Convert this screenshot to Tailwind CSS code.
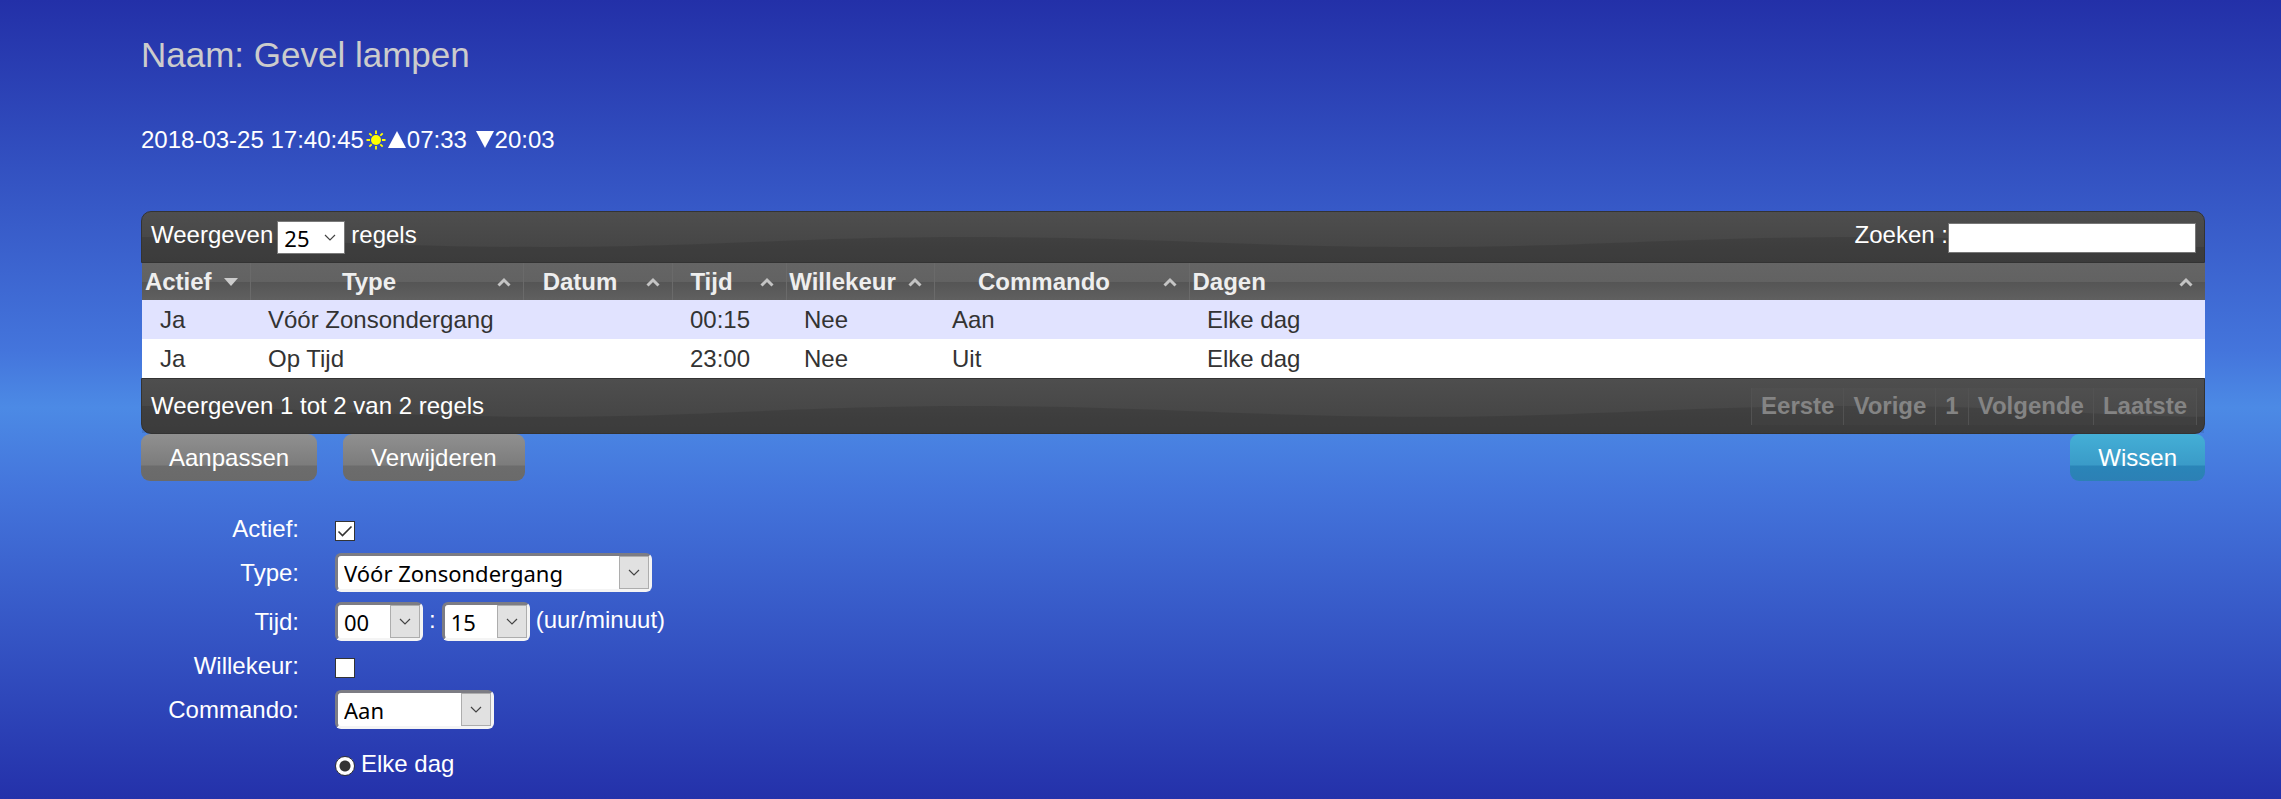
<!DOCTYPE html>
<html lang="nl">
<head>
    <meta charset="UTF-8">
    <meta name="viewport" content="width=device-width, initial-scale=1.0">
    <title>Timers - Gevel lampen</title>
    <script src="https://cdn.jsdelivr.net/npm/@tailwindcss/browser@4"></script>
</head>
<body class="min-h-screen bg-[linear-gradient(#2330a8,#4475dc_44%,#4c8ae5_51%,#4475dc_61%,#2431aa)] font-['Liberation_Sans',Arial,sans-serif] text-[24px] leading-[28px] text-white">
    <svg class="hidden">
        <symbol id="chevron" viewBox="0 0 12 8"><path d="M1 1l5 5 5-5" fill="none" stroke="#444" stroke-width="1.2"/></symbol>
        <symbol id="sort" viewBox="0 0 14 10"><path d="M1.500 8.500L7 3l5.500 5.500" fill="none" stroke="#c4c4c4" stroke-width="3"/></symbol>
        <symbol id="wave" viewBox="0 0 2064 50" preserveAspectRatio="none"><path d="M0 25C130 25 230 35 400 35S650 25 830 25S1110 35 1280 35S1540 25 1720 25S1950 35 2064 35V50H0Z" fill="#000" fill-opacity=".1"/></symbol>
    </svg>

    <main class="pt-[35px] pr-[76px] pl-[141px]">
        <h2 class="text-[35px] leading-[40px] text-[#ccc]">Naam: Gevel lampen</h2>

        <!-- tijd en zonstand -->
        <div class="mt-[51px] flex items-center whitespace-pre">
            <span>2018-03-25 17:40:45</span>
            <svg class="ml-[2px] h-5 w-5" viewBox="0 0 20 20" stroke="#ff0" stroke-width="1.800"><circle cx="10" cy="10" r="5" fill="#ff0" stroke="none"/><path d="M10 .5v3.500M10 16v3.500M.5 10H4M16 10h3.500M3.300 3.300l2.400 2.400M14.300 14.300l2.400 2.400M3.300 16.700l2.400-2.400M14.300 5.700l2.400-2.400"/></svg>
            <svg class="ml-[2px] h-5 w-[18px]" viewBox="0 0 18 20"><path d="M9 1l9 17H0z" fill="#fff"/></svg>
            <span class="ml-px">07:33 </span>
            <svg class="ml-[2px] h-5 w-[18px]" viewBox="0 0 18 20"><path d="M9 18L0 1h18z" fill="#fff"/></svg>
            <span class="ml-px">20:03</span>
        </div>

        <!-- tabel met timers -->
        <section class="mt-[57px]">
            <div class="relative flex h-[52px] items-start justify-between rounded-t-[10px] border border-[#333] bg-linear-to-b from-[#4e4e4e] to-[#424242] pt-[9px] pr-[8px] pl-[9px]">
                <svg class="absolute inset-0 h-full w-full"><use href="#wave"/></svg>
                <label class="relative flex">
                    <span>Weergeven</span>
                    <span class="relative mr-[6px] ml-[4px]">
                        <select class="h-[33px] w-[68px] appearance-none border border-[#7a7a7a] bg-white pl-[6px] font-['Noto_Sans',sans-serif] text-[22px] leading-[28px] text-black"><option>25</option></select>
                        <svg class="pointer-events-none absolute top-[13px] right-[9px] h-2 w-3"><use href="#chevron"/></svg>
                    </span>
                    <span>regels</span>
                </label>
                <label class="relative flex">
                    <span>Zoeken :</span>
                    <input type="text" class="mt-[2px] h-[30px] w-[248px] border border-[#777] bg-white px-1 text-black">
                </label>
            </div>

            <table class="ml-px w-[calc(100%-1px)] table-fixed border-collapse text-left">
                <colgroup>
                    <col class="w-[108px]"><col class="w-[273px]"><col class="w-[149px]"><col class="w-[114px]"><col class="w-[148px]"><col class="w-[255px]"><col>
                </colgroup>
                <thead>
                    <tr class="h-[37px] bg-[linear-gradient(#656565,#626262_50%,#555_52%,#606060)] text-center text-[#eee]">
                        <th class="relative border-r border-[#6a6a6a] pr-[35px]">Actief<svg class="absolute top-[15px] right-[12px] h-2 w-[14px]" viewBox="0 0 14 8"><path d="M0 0h14L7 8z" fill="#ccc"/></svg></th>
                        <th class="relative border-r border-[#6a6a6a] pr-[35px]">Type<svg class="absolute top-[14px] right-[12px] h-[10px] w-[14px]"><use href="#sort"/></svg></th>
                        <th class="relative border-r border-[#6a6a6a] pr-[35px]">Datum<svg class="absolute top-[14px] right-[12px] h-[10px] w-[14px]"><use href="#sort"/></svg></th>
                        <th class="relative border-r border-[#6a6a6a] pr-[35px]">Tijd<svg class="absolute top-[14px] right-[12px] h-[10px] w-[14px]"><use href="#sort"/></svg></th>
                        <th class="relative border-r border-[#6a6a6a] pr-[35px]">Willekeur<svg class="absolute top-[14px] right-[12px] h-[10px] w-[14px]"><use href="#sort"/></svg></th>
                        <th class="relative border-r border-[#6a6a6a] pr-[35px]">Commando<svg class="absolute top-[14px] right-[12px] h-[10px] w-[14px]"><use href="#sort"/></svg></th>
                        <th class="relative pl-[3px] text-left">Dagen<svg class="absolute top-[14px] right-[12px] h-[10px] w-[14px]"><use href="#sort"/></svg></th>
                    </tr>
                </thead>
                <tbody class="text-[#333]">
                    <tr class="h-[39px] bg-[#e1e3ff]">
                        <td class="pl-[18px]">Ja</td>
                        <td class="pl-[18px]">Vóór Zonsondergang</td>
                        <td></td>
                        <td class="pl-[18px]">00:15</td>
                        <td class="pl-[18px]">Nee</td>
                        <td class="pl-[18px]">Aan</td>
                        <td class="pl-[18px]">Elke dag</td>
                    </tr>
                    <tr class="h-[39px] bg-white">
                        <td class="pl-[18px]">Ja</td>
                        <td class="pl-[18px]">Op Tijd</td>
                        <td></td>
                        <td class="pl-[18px]">23:00</td>
                        <td class="pl-[18px]">Nee</td>
                        <td class="pl-[18px]">Uit</td>
                        <td class="pl-[18px]">Elke dag</td>
                    </tr>
                </tbody>
            </table>

            <div class="relative flex h-[56px] items-center justify-between rounded-b-[10px] border border-[#333] bg-linear-to-b from-[#4e4e4e] to-[#424242] pr-[7px] pl-[9px]">
                <svg class="absolute inset-0 h-full w-full"><use href="#wave"/></svg>
                <span class="relative">Weergeven 1 tot 2 van 2 regels</span>
                <nav class="relative flex border-r border-[#525252] font-bold text-[#848484]">
                    <button class="h-[37px] border-l border-[#525252] bg-white/2 px-[9px] font-bold">Eerste</button>
                    <button class="h-[37px] border-l border-[#525252] bg-white/2 px-[9px] font-bold">Vorige</button>
                    <button class="h-[37px] border-l border-[#525252] bg-white/2 px-[9px] font-bold">1</button>
                    <button class="h-[37px] border-l border-[#525252] bg-white/2 px-[9px] font-bold">Volgende</button>
                    <button class="h-[37px] border-l border-[#525252] bg-white/2 px-[9px] font-bold">Laatste</button>
                </nav>
            </div>
        </section>

        <div class="flex gap-[26px]">
            <button class="h-[47px] rounded-[9px] bg-[linear-gradient(#909090,#7c7c7c_66%,#6c6c6c_68%,#6a6a6a)] px-[28px]">Aanpassen</button>
            <button class="h-[47px] rounded-[9px] bg-[linear-gradient(#909090,#7c7c7c_66%,#6c6c6c_68%,#6a6a6a)] px-[28px]">Verwijderen</button>
            <button class="ml-auto h-[47px] rounded-[9px] bg-[linear-gradient(#44afd6,#3a9bc8_66%,#2a85b8_68%,#2c80b5)] px-[28px]">Wissen</button>
        </div>

        <!-- formulier -->
        <form class="mt-[33px] grid grid-cols-[158px_1fr] items-center gap-x-9 gap-y-[10px]">
            <label for="actief" class="text-right">Actief:</label>
            <div class="flex h-[29px] items-end pb-[2px]">
                <span class="relative flex">
                    <input id="actief" type="checkbox" checked class="h-5 w-5 appearance-none border border-[#333] bg-white">
                    <svg class="pointer-events-none absolute inset-0 h-5 w-5" viewBox="0 0 20 20"><path d="M3.500 10.500l4 4 9-9" fill="none" stroke="#333" stroke-width="1.600"/></svg>
                </span>
            </div>

            <label for="type" class="text-right">Type:</label>
            <div class="flex">
                <span class="relative">
                    <select id="type" class="block h-[39px] w-[317px] appearance-none rounded-[6px] border-3 border-t-[#7c7c84] border-r-[#f4f4f4] border-b-[#f4f4f4] border-l-[#7c7c84] bg-white pl-[6px] font-['Noto_Sans',sans-serif] text-[22px] leading-[30px] text-black"><option>Vóór Zonsondergang</option></select>
                    <span class="pointer-events-none absolute top-[3px] right-[3px] flex h-[33px] w-[30px] items-center justify-center border border-[#adadad] bg-[#e1e1e1]"><svg class="h-2 w-3"><use href="#chevron"/></svg></span>
                </span>
            </div>

            <label for="uur" class="text-right">Tijd:</label>
            <div class="flex">
                <span class="relative">
                    <select id="uur" class="block h-[39px] w-[88px] appearance-none rounded-[6px] border-3 border-t-[#7c7c84] border-r-[#f4f4f4] border-b-[#f4f4f4] border-l-[#7c7c84] bg-white pl-[6px] font-['Noto_Sans',sans-serif] text-[22px] leading-[30px] text-black"><option>00</option></select>
                    <span class="pointer-events-none absolute top-[3px] right-[3px] flex h-[33px] w-[30px] items-center justify-center border border-[#adadad] bg-[#e1e1e1]"><svg class="h-2 w-3"><use href="#chevron"/></svg></span>
                </span>
                <span class="mx-[6px] pt-1">:</span>
                <span class="relative">
                    <select aria-label="minuut" class="block h-[39px] w-[88px] appearance-none rounded-[6px] border-3 border-t-[#7c7c84] border-r-[#f4f4f4] border-b-[#f4f4f4] border-l-[#7c7c84] bg-white pl-[6px] font-['Noto_Sans',sans-serif] text-[22px] leading-[30px] text-black"><option>15</option></select>
                    <span class="pointer-events-none absolute top-[3px] right-[3px] flex h-[33px] w-[30px] items-center justify-center border border-[#adadad] bg-[#e1e1e1]"><svg class="h-2 w-3"><use href="#chevron"/></svg></span>
                </span>
                <span class="ml-[6px] pt-1">(uur/minuut)</span>
            </div>

            <label for="willekeur" class="text-right">Willekeur:</label>
            <div class="flex h-[29px] items-end pb-[2px]">
                <input id="willekeur" type="checkbox" class="h-5 w-5 appearance-none border border-[#333] bg-white">
            </div>

            <label for="commando" class="text-right">Commando:</label>
            <div class="flex">
                <span class="relative">
                    <select id="commando" class="block h-[39px] w-[159px] appearance-none rounded-[6px] border-3 border-t-[#7c7c84] border-r-[#f4f4f4] border-b-[#f4f4f4] border-l-[#7c7c84] bg-white pl-[6px] font-['Noto_Sans',sans-serif] text-[22px] leading-[30px] text-black"><option>Aan</option></select>
                    <span class="pointer-events-none absolute top-[3px] right-[3px] flex h-[33px] w-[30px] items-center justify-center border border-[#adadad] bg-[#e1e1e1]"><svg class="h-2 w-3"><use href="#chevron"/></svg></span>
                </span>
            </div>

            <label class="col-start-2 mt-[11px] flex items-start">
                <input type="radio" name="dagen" checked class="mt-[6px] mr-[6px] h-5 w-5 appearance-none rounded-full border border-[#333] bg-[radial-gradient(circle,#333_5px,#fff_6px)]">
                <span>Elke dag</span>
            </label>
        </form>
    </main>
</body>
</html>
